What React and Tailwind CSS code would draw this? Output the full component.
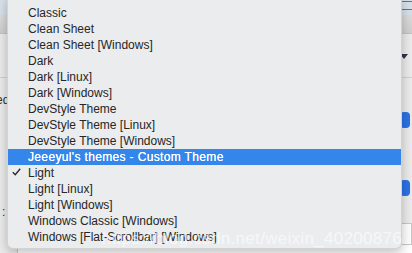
const themes = [
  "Classic",
  "Clean Sheet",
  "Clean Sheet [Windows]",
  "Dark",
  "Dark [Linux]",
  "Dark [Windows]",
  "DevStyle Theme",
  "DevStyle Theme [Linux]",
  "DevStyle Theme [Windows]",
  "Jeeeyul's themes - Custom Theme",
  "Light",
  "Light [Linux]",
  "Light [Windows]",
  "Windows Classic [Windows]",
  "Windows [Flat-Scrollbar] [Windows]",
];

const App = () => {
  const selected = "Light";
  const active = "Jeeeyul's themes - Custom Theme";

  return (
    <div
      className="relative h-[253px] w-[412px] overflow-hidden bg-[#ececec]"
      style={{ fontFamily: '"Liberation Sans", Arial, sans-serif' }}>
      {/* Preferences window behind the menu */}
      <div className="flex h-full flex-col">
        <div className="flex h-[15px] shrink-0 flex-col items-end gap-[7px] bg-[#d8e1e9] pt-[1px]">
          <div className="h-px w-[12px] bg-[#6b7680]" />
          <div className="h-px w-[12px] bg-[#6b7680]" />
        </div>
        <div className="h-[19px] shrink-0 border-b border-[#c4c4c4] bg-gradient-to-b from-[#dcdcdc] to-[#cfcfcf]" />
        <div className="flex h-[44px] shrink-0 items-center justify-end border-b border-[#d2d2d2] pr-[4px] pt-[2px]">
          <svg width="8" height="5" viewBox="0 0 8 5">
            <path d="M0 0h8L4 5z" fill="#3a2a4a" />
          </svg>
        </div>
        <div className="flex min-h-0 flex-1 justify-between">
          <div className="ml-[-4px] flex flex-col pt-[13px] text-[12px] text-[#333]">
            <span>ed</span>
            <span className="ml-[6px] mt-[94px]">:</span>
          </div>
          <div className="flex flex-col items-end">
            <div className="mr-[2px] mt-[34px] h-[18px] w-[10px] rounded-[4px] bg-[#2c72e6]" />
            <div className="mr-[2px] mt-[52px] h-[18px] w-[10px] rounded-[4px] bg-[#2c72e6]" />
            <div className="mt-[27px] h-[24px] w-[12px] border border-[#c8c8c8] bg-white" />
          </div>
        </div>
        <div className="ml-[17px] h-[8px] shrink-0 border-l border-[#c8c8c8] bg-white" />
      </div>

      {/* Popup menu */}
      <div className="absolute left-[7px] top-[-6px] w-[395px] rounded-[6px] border border-[#c9c9c9]/70 bg-[#ebecee] pb-[3px] pt-[10px] shadow-[0_4px_12px_rgba(0,0,0,0.25)]">
        {themes.map((t) => (
          <div
            key={t}
            className={
              t === active
                ? "flex h-[16px] items-center bg-[#3486ea] pl-[20px] text-[12px] tracking-[0.35px] text-white [text-shadow:0_0_0.4px_#fff]"
                : "flex h-[16px] items-center pl-[20px] text-[12px] text-[#262626]"
            }>
            <span className="relative">
              {t === selected && (
                <svg
                  className="absolute left-[-16px] top-[4px]"
                  width="9"
                  height="8"
                  viewBox="0 0 9 8">
                  <path
                    d="M0.8 4.2L3.3 6.8L8.2 0.8"
                    fill="none"
                    stroke="#2b2b2b"
                    strokeWidth="1.4"
                  />
                </svg>
              )}
              {t}
            </span>
          </div>
        ))}
      </div>

      {/* Watermark */}
      <span className="pointer-events-none absolute right-[10px] top-[226px] whitespace-nowrap text-[17px] tracking-[0.3px] text-white/60">
        https://blog.csdn.net/weixin_40200876
      </span>
    </div>
  );
};

export default App;
